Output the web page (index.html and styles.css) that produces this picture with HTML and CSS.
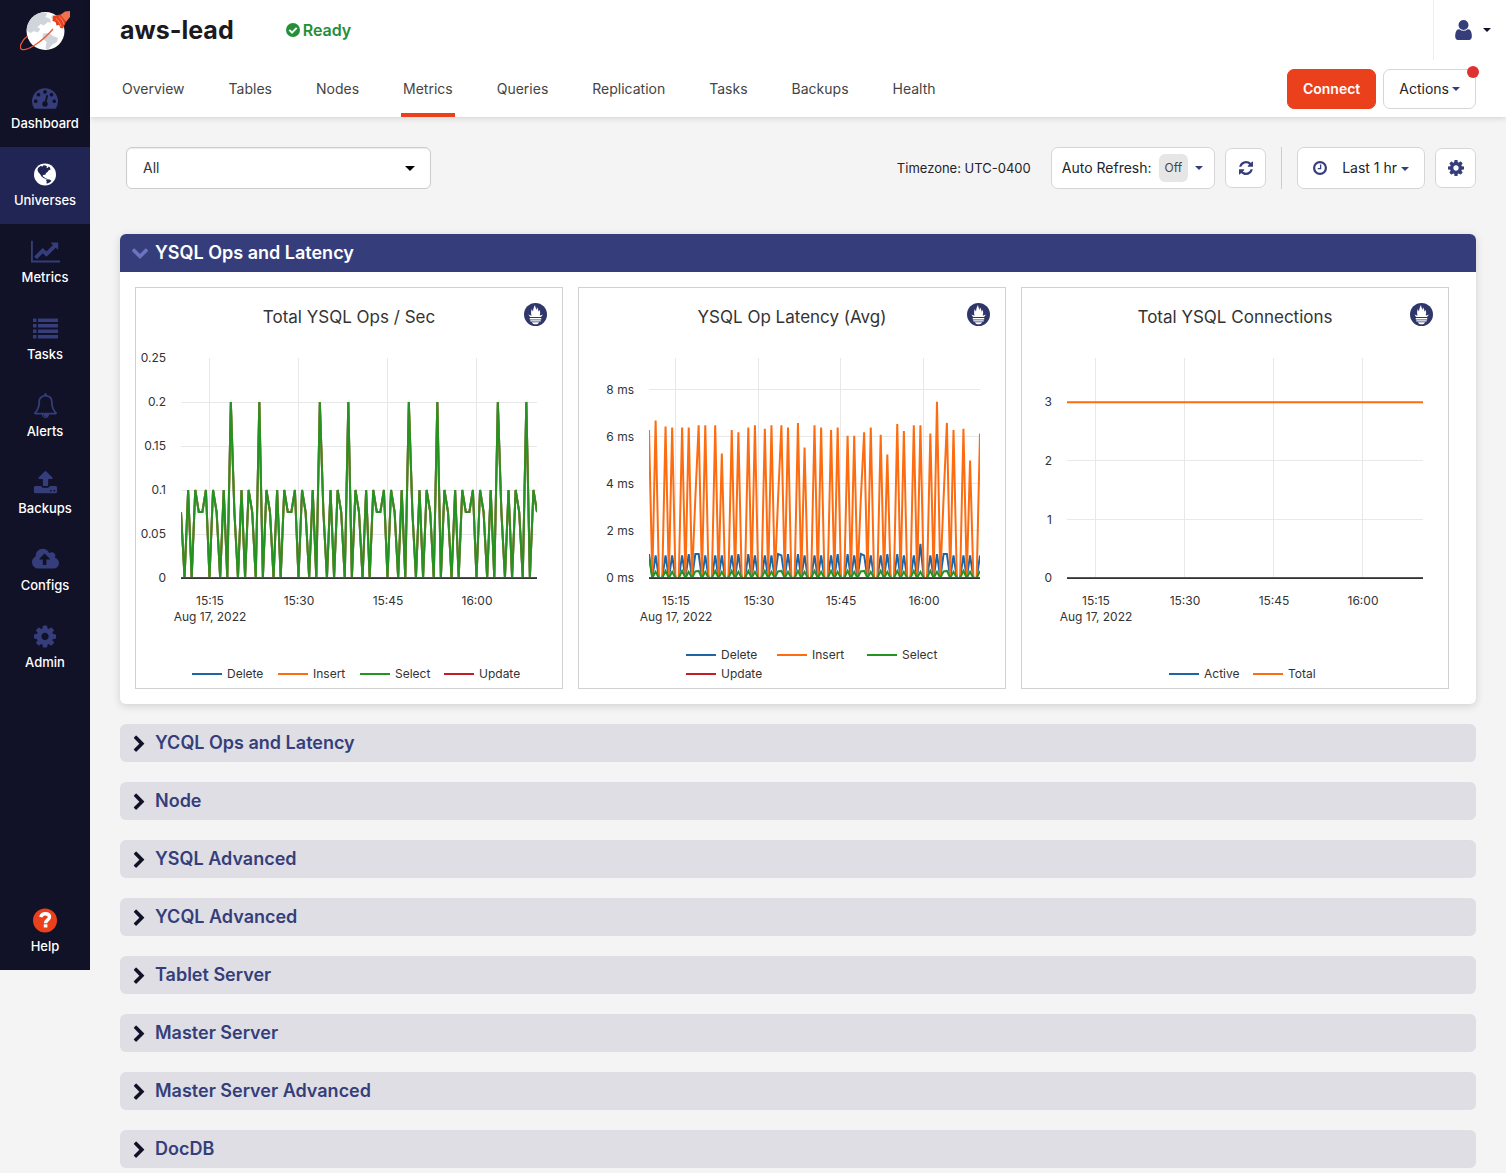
FILE: index.html
```html
<!DOCTYPE html>
<html lang="en">
<head>
<meta charset="utf-8">
<meta name="viewport" content="width=device-width, initial-scale=1">
<title>aws-lead | Metrics</title>
<link rel="stylesheet" href="styles.css">
</head>
<body>
<svg class="sprite" aria-hidden="true">
  <symbol id="i-dashboard" viewBox="0 0 1792 1792"><path d="M384 1152q0-53-37.500-90.500t-90.500-37.500-90.500 37.500-37.500 90.500 37.500 90.500 90.500 37.500 90.500-37.500 37.500-90.500zm192-448q0-53-37.500-90.500t-90.500-37.500-90.500 37.500-37.500 90.500 37.500 90.500 90.500 37.500 90.500-37.500 37.500-90.500zm428 481l101-382q6-26-7.500-48.500t-38.500-29.500-48 6.500-30 39.500l-101 382q-60 5-107 43.500t-63 98.500q-20 77 20 146t117 89 146-20 89-117q16-60-6-117t-72-91zm660-33q0-53-37.500-90.500t-90.500-37.500-90.500 37.500-37.500 90.500 37.500 90.500 90.500 37.500 90.500-37.500 37.500-90.500zm-640-640q0-53-37.500-90.500t-90.500-37.500-90.500 37.500-37.500 90.500 37.500 90.500 90.500 37.500 90.500-37.500 37.500-90.500zm448 192q0-53-37.500-90.500t-90.500-37.500-90.500 37.500-37.500 90.500 37.500 90.500 90.500 37.500 90.500-37.500 37.500-90.500zm320 448q0 261-141 483-19 29-54 29h-1402q-35 0-54-29-141-221-141-483 0-182 71-348t191-286 286-191 348-71 348 71 286 191 191 286 71 348z"/></symbol>
  <symbol id="i-globe" viewBox="0 0 22 22"><circle cx="11" cy="11" r="11"/><path fill="#202554" d="M4 4.500L6.500 2.600 8.500 3 9.500 1.800 11.500 2 13 3 12.500 4.500 14 4.200 14.500 3 16 4 16.500 6 14.500 7 13.500 8.500 12 9.500 11.500 11 10 11.500 9 11.200 8.700 13 10.300 13.500 10.800 14.800 13 15 12.500 16 9.500 14.500 7.500 13 6 10.500 4.200 8.500 3.500 6.500zM13 15.800L15.500 16 17.500 17.300 16 18.700 13.500 20 12.300 19.700 12.800 18 12 17z"/></symbol>
  <symbol id="i-metrics" viewBox="0 0 2048 1792"><path d="M2048 1536v128h-2048v-1536h128v1408h1920zm-128-1248v435q0 21-19.500 29.500t-35.500-7.500l-121-121-633 633q-10 10-23 10t-23-10l-233-233-416 416-192-192 585-585q10-10 23-10t23 10l233 233 464-464-121-121q-16-16-7.500-35.500t29.500-19.500h435q14 0 23 9t9 23z"/></symbol>
  <symbol id="i-list" viewBox="0 0 25 20"><path d="M0 0h3.500v3.500H0zM5 0h20v3.500H5zM0 5.500h3.500V9H0zM5 5.500h20V9H5zM0 11h3.500v3.500H0zM5 11h20v3.500H5zM0 16.500h3.500V20H0zM5 16.500h20V20H5z"/></symbol>
  <symbol id="i-bell" viewBox="0 0 1792 1792"><path d="M912 1696q0-16-16-16-59 0-101.500-42.500t-42.500-101.500q0-16-16-16t-16 16q0 73 51.500 124.500t124.500 51.500q16 0 16-16zm-666-288h1300q-266-300-266-832 0-51-24-105t-69-103-121.500-80.500-169.500-31.500-169.500 31.500-121.500 80.500-69 103-24 105q0 532-266 832zm1482 0q0 52-38 90t-90 38h-448q0 106-75 181t-181 75-181-75-75-181h-448q-52 0-90-38t-38-90q50-42 91-88t85-119.500 74.500-158.500 50-206 19.500-260q0-152 117-282.500t307-158.500q-8-19-8-39 0-40 28-68t68-28 68 28 28 68q0 20-8 39 190 28 307 158.500t117 282.500q0 139 19.500 260t50 206 74.500 158.500 85 119.500 91 88z"/></symbol>
  <symbol id="i-upload" viewBox="0 0 1792 1792"><path d="M1344 1472q0-26-19-45t-45-19-45 19-19 45 19 45 45 19 45-19 19-45zm256 0q0-26-19-45t-45-19-45 19-19 45 19 45 45 19 45-19 19-45zm128-224v320q0 40-28 68t-68 28h-1472q-40 0-68-28t-28-68v-320q0-40 28-68t68-28h427q21 56 70.500 92t110.500 36h256q61 0 110.500-36t70.500-92h427q40 0 68 28t28 68zm-325-648q-17 40-59 40h-256v448q0 26-19 45t-45 19h-256q-26 0-45-19t-19-45v-448h-256q-42 0-59-40-17-39 14-69l448-448q18-19 45-19t45 19l448 448q31 30 14 69z"/></symbol>
  <symbol id="i-cloud" viewBox="0 0 1920 1792"><path d="M1280 864q0-14-9-23l-352-352q-9-9-23-9t-23 9l-351 351q-10 12-10 24 0 14 9 23t23 9h224v352q0 13 9.500 22.500t22.500 9.500h192q13 0 22.500-9.500t9.500-22.500v-352h224q13 0 22.500-9.500t9.500-22.500zm640 288q0 159-112.500 271.500t-271.500 112.500h-1088q-185 0-316.500-131.500t-131.500-316.500q0-130 70-240t188-165q-2-30-2-43 0-212 150-362t362-150q156 0 285.500 87t188.500 231q71-62 166-62 106 0 181 75t75 181q0 76-41 138 130 31 213.500 135.500t83.500 238.500z"/></symbol>
  <symbol id="i-cog" viewBox="128 128 1536 1536"><path d="M1152 896q0-106-75-181t-181-75-181 75-75 181 75 181 181 75 181-75 75-181zm512-109v222q0 12-8 23t-20 13l-185 28q-19 54-39 91 35 50 107 138 10 12 10 25t-9 23q-27 37-99 108t-94 71q-12 0-26-9l-138-108q-44 23-91 38-16 136-29 186-7 28-36 28h-222q-14 0-24.500-8.500t-11.500-21.500l-28-184q-49-16-90-37l-141 107q-10 9-25 9-14 0-25-11-126-114-165-168-7-10-7-23 0-12 8-23 15-21 51-66.500t54-70.500q-27-50-41-99l-183-27q-13-2-21-12.500t-8-23.500v-222q0-12 8-23t19-13l186-28q14-46 39-92-40-57-107-138-10-12-10-24 0-10 9-23 26-36 98.500-107.500t94.500-71.500q13 0 26 10l138 107q44-23 91-38 16-136 29-186 7-28 36-28h222q14 0 24.500 8.500t11.500 21.500l28 184q49 16 90 37l142-107q9-9 24-9 13 0 25 10 129 119 165 170 7 8 7 22 0 12-8 23-15 21-51 66.500t-54 70.500q26 50 41 98l183 28q13 2 21 12.500t8 23.500z"/></symbol>
  <symbol id="i-help" viewBox="0 0 24 24"><circle cx="12" cy="12" r="12" fill="#ea411c"/><path fill="none" stroke="#fff" stroke-width="3.400" d="M7.800 8.600C8.500 6 10 5.200 12.200 5.200c2.600 0 4.300 1.300 4.300 3.300 0 3-3.900 2.900-3.900 6.300"/><path fill="#fff" d="M10.800 15.800h3.600v3.200h-3.600z"/></symbol>
  <symbol id="i-user" viewBox="256 128 1280 1536"><path d="M1536 1399q0 109-62.500 187t-150.500 78h-854q-88 0-150.500-78t-62.500-187q0-85 8.500-160.500t31.500-152 58.500-131 94-89 134.500-34.500q131 128 313 128t313-128q76 0 134.500 34.500t94 89 58.500 131 31.500 152 8.500 160.500zm-256-887q0 159-112.500 271.500t-271.500 112.500-271.500-112.500-112.500-271.500 112.500-271.500 271.500-112.500 271.500 112.500 112.500 271.500z"/></symbol>
  <symbol id="i-refresh" viewBox="128 128 1536 1536"><path d="M1639 1056q0 5-1 7-64 268-268 434.500t-478 166.500q-146 0-282.500-55t-243.500-157l-129 129q-19 19-45 19t-45-19-19-45v-448q0-26 19-45t45-19h448q26 0 45 19t19 45-19 45l-137 137q71 66 161 102t187 36q134 0 250-65t186-179q11-17 53-117 8-23 30-23h192q13 0 22.500 9.500t9.500 22.500zm25-800v448q0 26-19 45t-45 19h-448q-26 0-45-19t-19-45 19-45l138-138q-148-137-349-137-134 0-250 65t-186 179q-11 17-53 117-8 23-30 23h-199q-13 0-22.500-9.500t-9.500-22.500v-7q65-268 270-434.500t480-166.500q146 0 284 55.500t245 156.500l130-129q19-19 45-19t45 19 19 45z"/></symbol>
  <symbol id="i-clock" viewBox="0 0 14 14"><circle cx="7" cy="7" r="5.900" fill="none" stroke="currentColor" stroke-width="2.200"/><path fill="none" stroke="currentColor" stroke-width="1.300" d="M7.600 3.500v4.200H4.800"/></symbol>
  <symbol id="i-check" viewBox="0 0 14 14"><circle cx="7" cy="7" r="7"/><path fill="none" stroke="#fff" stroke-width="2" d="M3.300 6.900L6 9.600 10.700 4.900"/></symbol>
  <symbol id="i-right" viewBox="0 0 1792 1792"><path d="M1363 877l-742 742q-19 19-45 19t-45-19l-166-166q-19-19-19-45t19-45l531-531-531-531q-19-19-19-45t19-45l166-166q19-19 45-19t45 19l742 742q19 19 19 45t-19 45z" transform="translate(-64 128)"/></symbol>
  <symbol id="i-down" viewBox="0 0 1792 1792"><path d="M1683 808l-742 741q-19 19-45 19t-45-19l-742-741q-19-19-19-45.500t19-45.500l166-165q19-19 45-19t45 19l531 531 531-531q19-19 45-19t45 19l166 165q19 19 19 45.500t-19 45.500z" transform="translate(0 -96)"/></symbol>
  <symbol id="i-prometheus" viewBox="0 0 24 24"><circle cx="12" cy="12" r="12" fill="#2f3669"/><g fill="#fff"><path d="M6.300 14.600C4.800 12.500 4.600 11.800 5 12c1 .8 2 1 2.900 1C7 10.500 7.400 8 8.200 6.300c.3 1.400.9 2.200 1.200 2.500C9.600 6 10.500 4 11.500 2.200c.1 1.800 1 3.200 1.500 5.200.4-1.200.5-1.900.4-3 1.200 1.200 1.600 3 1.800 4.600.5-.6.700-1 .8-1.900 1 1.700 1.200 3.700.4 5.900.8 0 1.800-.2 2.800-1 .2.600-.3 1.700-1.500 2.600z"/><path d="M6 15.700h12v1.500H6zM6.600 18h10.800v1.200H6.600zM8.300 20h7.400c-.7 1.600-2 2.200-3.700 2.200s-3-.6-3.700-2.200z"/></g></symbol>
</svg>
<div class="app">
  <aside class="sidebar">
    <a class="logo" href="#" aria-label="Home">
      <svg width="52" height="42" viewBox="1 0 52 42" aria-hidden="true">
        <circle cx="26.500" cy="21" r="19" fill="#fff"/>
        <path fill="#cfd5da" d="M16.500 5C11 9 7.500 15 7.800 21l4 2 3-2 4 1.500 2.500-3.500-3-2 3.500-3 3 1.500 4-3.500 3 1-.500-4-5-2 2-3.500C25 1.500 20 2.500 16.500 5zM24 23.500l6-.500 4 3 5 2-1 4-4.500 2.500L29 39.500l-2.500-1 1-6.500-4-4zM34 4.500l5 4-4 2-3-3z"/>
        <path fill="none" stroke="#ea5a3a" stroke-width="1.300" d="M34 19C22 33 8 41 3 39.500-1 38 3 30 8.500 26"/>
        <path fill="#f0714f" d="M41 5l5-3.500 5-.500v6L47 12z"/>
        <path fill="#ea411c" d="M34 6l7-1.500 6 7.500-3 6.500-2.500-.500-1.500-3-2.500.500-1-3.500-3-1z"/>
        <path fill="none" stroke="#f58a6d" d="M37 8.500c2.500 2 4 4.500 5 8M40 6.500c2.500 2 4 4.500 5 8"/>
      </svg>
    </a>
    <nav class="side-nav" aria-label="Main">
      <a class="side-link" href="#"><svg width="26" height="26"><use href="#i-dashboard"/></svg><span>Dashboard</span></a>
      <a class="side-link active" href="#"><svg width="22" height="22"><use href="#i-globe"/></svg><span>Universes</span></a>
      <a class="side-link" href="#"><svg width="29" height="26"><use href="#i-metrics"/></svg><span>Metrics</span></a>
      <a class="side-link" href="#"><svg width="25" height="20"><use href="#i-list"/></svg><span>Tasks</span></a>
      <a class="side-link" href="#"><svg width="25" height="25"><use href="#i-bell"/></svg><span>Alerts</span></a>
      <a class="side-link" href="#"><svg width="25" height="25"><use href="#i-upload"/></svg><span>Backups</span></a>
      <a class="side-link" href="#"><svg width="27" height="25"><use href="#i-cloud"/></svg><span>Configs</span></a>
      <a class="side-link" href="#"><svg width="22" height="22"><use href="#i-cog"/></svg><span>Admin</span></a>
    </nav>
    <a class="side-link help" href="#"><svg width="24" height="24"><use href="#i-help"/></svg><span>Help</span></a>
  </aside>

  <div class="page">
    <header class="header">
      <div class="title-row">
        <h1>aws-lead</h1>
        <span class="status"><svg width="14" height="14"><use href="#i-check"/></svg>Ready</span>
        <button class="user-menu" type="button" aria-label="User menu"><svg width="17" height="20"><use href="#i-user"/></svg><span class="caret"></span></button>
      </div>
      <div class="tab-row">
        <nav class="tabs" aria-label="Universe">
          <a href="#">Overview</a><a href="#">Tables</a><a href="#">Nodes</a><a class="active" href="#" aria-current="page">Metrics</a><a href="#">Queries</a><a href="#">Replication</a><a href="#">Tasks</a><a href="#">Backups</a><a href="#">Health</a>
        </nav>
        <button class="btn btn-primary" type="button">Connect</button>
        <button class="btn btn-actions" type="button">Actions<span class="caret"></span><i class="dot"></i></button>
      </div>
    </header>

    <main class="content">
      <div class="toolbar">
        <div class="node-filter">
          <select aria-label="Nodes"><option>All</option></select>
          <span class="caret"></span>
        </div>
        <span class="timezone">Timezone: UTC-0400</span>
        <button class="btn btn-refresh" type="button">Auto Refresh:<span class="badge">Off</span><span class="caret"></span></button>
        <button class="btn btn-icon" type="button" aria-label="Refresh"><svg width="14" height="14"><use href="#i-refresh"/></svg></button>
        <span class="divider"></span>
        <button class="btn btn-range" type="button"><svg width="14" height="14"><use href="#i-clock"/></svg><span>Last 1 hr<span class="caret"></span></span></button>
        <button class="btn btn-icon" type="button" aria-label="Settings"><svg width="16" height="16"><use href="#i-cog"/></svg></button>
      </div>

      <section class="panel open">
        <h2><button type="button" aria-expanded="true"><svg width="18" height="18"><use href="#i-down"/></svg>YSQL Ops and Latency</button></h2>
        <div class="charts">
          <div class="chart" id="chart-ops"></div>
          <div class="chart" id="chart-latency"></div>
          <div class="chart" id="chart-connections"></div>
        </div>
      </section>
      <section class="panel"><h2><button type="button" aria-expanded="false"><svg width="18" height="18"><use href="#i-right"/></svg>YCQL Ops and Latency</button></h2></section>
      <section class="panel"><h2><button type="button" aria-expanded="false"><svg width="18" height="18"><use href="#i-right"/></svg>Node</button></h2></section>
      <section class="panel"><h2><button type="button" aria-expanded="false"><svg width="18" height="18"><use href="#i-right"/></svg>YSQL Advanced</button></h2></section>
      <section class="panel"><h2><button type="button" aria-expanded="false"><svg width="18" height="18"><use href="#i-right"/></svg>YCQL Advanced</button></h2></section>
      <section class="panel"><h2><button type="button" aria-expanded="false"><svg width="18" height="18"><use href="#i-right"/></svg>Tablet Server</button></h2></section>
      <section class="panel"><h2><button type="button" aria-expanded="false"><svg width="18" height="18"><use href="#i-right"/></svg>Master Server</button></h2></section>
      <section class="panel"><h2><button type="button" aria-expanded="false"><svg width="18" height="18"><use href="#i-right"/></svg>Master Server Advanced</button></h2></section>
      <section class="panel"><h2><button type="button" aria-expanded="false"><svg width="18" height="18"><use href="#i-right"/></svg>DocDB</button></h2></section>
    </main>
  </div>
</div>
<script src="charts.js"></script>
</body>
</html>
```

FILE: styles.css
```css
* { box-sizing: border-box; }
body {
  margin: 0;
  background: #f4f4f4;
  color: #333;
  font: 14px/20px Inter, "Liberation Sans", sans-serif;
}
a { color: inherit; text-decoration: none; }
button, select { font: inherit; color: inherit; margin: 0; }
button { cursor: pointer; }
svg { fill: currentColor; flex: none; }
.sprite { display: none; }

.app { display: flex; align-items: flex-start; }

.sidebar {
  width: 90px;
  flex: none;
  display: flex;
  flex-direction: column;
  background: #111127;
  color: #fff;
}
.logo { height: 70px; padding: 10px 0 0 20px; }
.logo svg { display: block; }
.side-link {
  height: 77px;
  display: flex;
  flex-direction: column;
  align-items: center;
  padding-top: 12px;
  color: #353e7b;
  font-size: 13px;
  font-weight: 500;
}
.side-link svg { height: 31px; }
.side-link span { color: #fff; line-height: 20px; }
.side-link.active { background: #202554; color: #fff; }
.help { margin-top: 207px; }

.page { flex: 1; min-width: 0; }
.header {
  position: relative;
  background: #fff;
  box-shadow: 0 1px 6px rgba(0, 0, 0, .15);
}
.title-row { display: flex; align-items: center; height: 60px; padding-left: 30px; }
h1 { margin: 0; font-size: 25px; line-height: 30px; font-weight: 700; color: #1a1a1f; }
.status {
  display: flex;
  align-items: center;
  gap: 3px;
  margin-left: 52px;
  color: #248f35;
  font-size: 16px;
  font-weight: 600;
}
.user-menu {
  display: flex;
  align-items: center;
  gap: 11px;
  height: 60px;
  margin-left: auto;
  padding: 0 15px 0 21px;
  border: 0;
  border-left: 1px solid #eee;
  background: none;
  color: #353e7b;
}
.user-menu .caret { color: #111127; }
.caret {
  display: inline-block;
  border: 4px solid transparent;
  border-top-color: currentColor;
  border-bottom: 0;
  vertical-align: middle;
}
.tab-row { display: flex; align-items: center; gap: 7px; height: 57px; padding: 0 30px; }
.tabs { display: flex; gap: 40px; flex: 1; align-self: stretch; color: #444; }
.tabs a { padding: 19px 2px 0; border-bottom: 4px solid transparent; }
.tabs a.active { border-color: #ea411c; }

.btn {
  display: flex;
  align-items: center;
  justify-content: center;
  height: 40px;
  padding: 0 15px;
  border: 1px solid #d6d6d9;
  border-radius: 7px;
  background: #fff;
  color: #232329;
}
.btn .caret { color: #353e7b; }
.btn-primary { border-color: #ea411c; background: #ea411c; color: #fff; font-weight: 600; }
.btn-actions { position: relative; gap: 3px; }
.dot {
  position: absolute;
  top: -4px;
  right: -4px;
  width: 12px;
  height: 12px;
  border-radius: 50%;
  background: #e03131;
}

.content { padding: 30px 30px 5px; }
.toolbar { display: flex; align-items: center; gap: 10px; padding-left: 6px; margin-bottom: 45px; }
.node-filter { position: relative; width: 305px; margin-right: auto; }
.node-filter select {
  display: block;
  width: 100%;
  height: 42px;
  padding: 0 16px;
  border: 1px solid #ccc;
  border-radius: 6px;
  background: #fff;
  box-shadow: inset 0 1px 1px rgba(0, 0, 0, .08);
  appearance: none;
}
.node-filter .caret {
  position: absolute;
  top: 19px;
  right: 16px;
  border-width: 5px 5px 0;
  color: #000;
  pointer-events: none;
}
.timezone { margin-right: 10px; font-size: 13px; color: #232329; }
.btn-refresh { height: 42px; padding: 0 11px 0 10px; gap: 7px; }
.badge { padding: 4px 6px; border-radius: 6px; background: #e6e6e6; color: #444; font-size: 12px; }
.btn-icon { width: 41px; padding: 0; color: #353e7b; }
.divider { width: 1px; height: 42px; margin: 0 5px; background: #ccc; }
.btn-range { height: 42px; gap: 15px; }
.btn-range svg { color: #353e7b; }
.btn-range .caret { margin-left: 4px; }

.panel { margin-bottom: 20px; border-radius: 6px; background: #dfdee4; color: #353e7b; }
.panel:last-child { margin-bottom: 0; }
.panel h2 { margin: 0; font-size: 18px; line-height: 38px; font-weight: 600; }
.panel h2 button {
  display: flex;
  align-items: center;
  gap: 6px;
  width: 100%;
  height: 38px;
  padding: 0 11px;
  border: 0;
  border-radius: 6px;
  background: none;
  text-align: left;
}
.panel h2 svg { color: #111127; }
.open { background: #fff; box-shadow: 0 2px 8px rgba(0, 0, 0, .15); }
.open h2 button { border-radius: 6px 6px 0 0; background: #353e7b; color: #fff; }
.open h2 svg { color: #6b74bd; }

.charts {
  display: grid;
  grid-template-columns: repeat(3, 1fr);
  gap: 15px;
  padding: 15px 27px 15px 15px;
}
.chart { border: 1px solid #d2d2d2; }
.chart svg { display: block; }
.chart text { fill: #333; font-size: 12px; }
.chart .chart-title { font-size: 17px; text-anchor: middle; }
.chart .y-label { text-anchor: end; }
.chart .x-label { text-anchor: middle; }
.grid-line { fill: #e8e8e8; }
.zero-line { fill: #333; }
.series { fill: none; stroke-width: 2; }
```

FILE: charts.js
```js
const BLUE = '#1c66a6', ORANGE = '#fd6c10', GREEN = '#259322', RED = '#c61a27';
const SAMPLES = 101;
const TOP = 70, BASE = 290, RIGHT = 401;

const constant = v => Array(SAMPLES).fill(v);

// Operation counts repeat every 25 samples.
const cycle = [3, 0, 4, 0, 4, 3, 3, 4, 0, 4, 3, 0, 4, 0, 8, 3, 0, 4, 0, 4, 3, 0, 8, 0, 4];
const ops = Array.from({ length: SAMPLES }, (_, i) => cycle[i % 25] / 40);

// Calls land on the first and third sample of every five.
const insertPeaks = [6.3, 6.7, 6.45, 6.4, 6.4, 6.4, 6.5, 6.5, 6.5, 5.3, 6.3, 6.2, 6.4, 6.5,
  6.35, 6.5, 6.5, 6.4, 6.6, 5.55, 6.5, 6.4, 6.3, 6.4, 6.05, 6.05, 6.2, 6.4, 6.1, 5.25,
  6.55, 6.25, 6.5, 6.5, 6.15, 7.5, 6.6, 6.3, 6.35, 5, 6.15];
function bursts(peak, early) {
  const out = constant(0);
  let n = 0;
  for (let i = 0; i < SAMPLES; i++) {
    if (i % 5 === 0 || i % 5 === 2) out[i] = peak(n++, i);
    if (i % 25 === 14) out[i] = early;
  }
  return out;
}
const latencyInsert = bursts(n => insertPeaks[n], 3.4);
const latencyDelete = bursts((n, i) => i === 82 ? 1.45 : i % 3 ? 0.96 : 1.02, 1.02);
const latencySelect = bursts((n, i) => i === 0 ? 0.9 : i % 5 ? 0.26 : 0.3, 0.28);

function drawChart(id, c) {
  const w = RIGHT - c.left;
  let s = `<svg width="100%" viewBox="0 0 426 400" role="img" aria-label="${c.title}">`;
  s += `<text class="chart-title" x="213" y="35">${c.title}</text>`;
  s += '<a href="#" aria-label="Open in Prometheus"><use href="#i-prometheus" x="388" y="15" width="23" height="23"/></a>';
  c.xTicks.forEach(x => { s += `<rect class="grid-line" x="${x}" y="${TOP}" width="1" height="${BASE - TOP}"/>`; });
  c.yTicks.forEach(([label, y, line]) => {
    if (line) s += `<rect class="grid-line" x="${c.left}" y="${line}" width="${w}" height="1"/>`;
    s += `<text class="y-label" x="${c.labelEnd}" y="${y + 4}">${label}</text>`;
  });
  s += `<rect class="zero-line" x="${c.left}" y="${BASE - 1}" width="${w}" height="2"/>`;
  s += `<svg x="${c.left}" y="${TOP}" width="${w}" height="${BASE - TOP}">`;
  c.series.forEach(([color, values]) => {
    const pts = values.map((v, i) => `${(i * w / (SAMPLES - 1)).toFixed(2)},${(BASE - TOP - v * c.scale).toFixed(2)}`);
    s += `<polyline class="series" stroke="${color}" points="${pts.join(' ')}"/>`;
  });
  s += '</svg>';
  ['15:15', '15:30', '15:45', '16:00'].forEach((t, i) => {
    s += `<text class="x-label" x="${c.xTicks[i] + 1}" y="317">${t}</text>`;
  });
  s += `<text class="x-label" x="${c.xTicks[0] + 1}" y="333">Aug 17, 2022</text>`;
  c.legend.forEach(([label, color, x, y]) => {
    s += `<rect fill="${color}" x="${x}" y="${y - 1}" width="30" height="2"/><text x="${x + 35}" y="${y + 4}">${label}</text>`;
  });
  document.getElementById(id).innerHTML = s + '</svg>';
}

// yTicks: label, label centre, grid line position.
drawChart('chart-ops', {
  title: 'Total YSQL Ops / Sec', left: 45, labelEnd: 30, scale: 880,
  xTicks: [73, 162, 251, 340],
  yTicks: [['0.25', 70], ['0.2', 114, 114], ['0.15', 158, 158], ['0.1', 202, 202], ['0.05', 246, 246], ['0', 290]],
  series: [[BLUE, ops], [ORANGE, ops], [GREEN, ops], [RED, constant(0)]],
  legend: [['Delete', BLUE, 56, 386], ['Insert', ORANGE, 142, 386], ['Select', GREEN, 224, 386], ['Update', RED, 308, 386]]
});
drawChart('chart-latency', {
  title: 'YSQL Op Latency (Avg)', left: 70, labelEnd: 55, scale: 23.5,
  xTicks: [96, 179, 261, 344],
  yTicks: [['8 ms', 102, 101], ['6 ms', 149, 148], ['4 ms', 196, 195], ['2 ms', 243, 242], ['0 ms', 290]],
  series: [[BLUE, latencyDelete], [ORANGE, latencyInsert], [GREEN, latencySelect], [RED, constant(0)]],
  legend: [['Delete', BLUE, 107, 367], ['Insert', ORANGE, 198, 367], ['Select', GREEN, 288, 367], ['Update', RED, 107, 386]]
});
drawChart('chart-connections', {
  title: 'Total YSQL Connections', left: 45, labelEnd: 30, scale: 58.6,
  xTicks: [73, 162, 251, 340],
  yTicks: [['3', 114, 114], ['2', 173, 172], ['1', 232, 231], ['0', 290]],
  series: [[BLUE, constant(0)], [ORANGE, constant(3)]],
  legend: [['Active', BLUE, 147, 386], ['Total', ORANGE, 231, 386]]
});
```
